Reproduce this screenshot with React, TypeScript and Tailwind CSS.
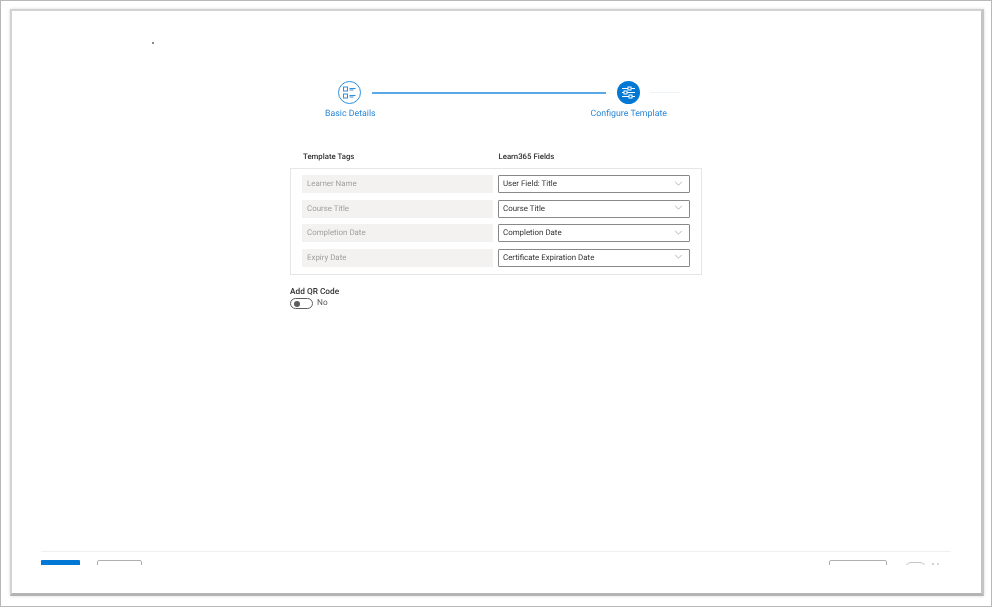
const font = { fontFamily: 'Roboto, "Open Sans", sans-serif' };

const rows = [
  ["Learner Name", "User Field: Title"],
  ["Course Title", "Course Title"],
  ["Completion Date", "Completion Date"],
  ["Expiry Date", "Certificate Expiration Date"],
];

function ChecklistIcon() {
  return (
    <svg width="15" height="15" viewBox="0 0 15 15" fill="none" stroke="#2f8fdc" strokeWidth="1">
      <rect x="1.5" y="2" width="4" height="4" />
      <rect x="1.5" y="9" width="4" height="4" />
      <path d="M7.5 3.5h6M7.5 5h4M7.5 10.5h6M7.5 12h4" />
    </svg>
  );
}

function SlidersIcon() {
  return (
    <svg width="15" height="15" viewBox="0 0 15 15" fill="none" stroke="#ffffff" strokeWidth="1">
      <path d="M1 3.5h6M10 3.5h4M1 7.5h2M6 7.5h8M1 11.5h7M11 11.5h3" />
      <rect x="7" y="2" width="3" height="3" />
      <rect x="3" y="6" width="3" height="3" />
      <rect x="8" y="10" width="3" height="3" />
    </svg>
  );
}

function Chevron() {
  return (
    <svg className="-mt-[2px]" width="9" height="5" viewBox="0 0 10 6" fill="none" stroke="#a19f9d" strokeWidth="0.9">
      <path d="M1 1l4 4 4-4" />
    </svg>
  );
}

export default function App() {
  return (
    <div className="w-[992px] h-[607px] overflow-hidden bg-white border border-[#b8b8b8] blur-[0.55px] [text-rendering:geometricPrecision]" style={font}>
      <div className="relative ml-[9px] mt-[8px] w-[974px] h-[587px] flex flex-col bg-white border-2 border-[#d2d2d2] border-r-[3px] border-b-[3px] border-r-[#c4c4c4] border-b-[#b4b4b4] shadow-[0_0_3px_#d8d8d8]">
        <div className="absolute left-[140px] top-[31px] w-[2px] h-[2px] bg-[#8a8a8a]" />
        <div className="flex-1 flex flex-col">
          <div className="ml-[313px] mt-[70px]">
            <div className="flex items-center pl-[13px]">
              <div className="w-[23px] h-[23px] rounded-full border border-[#2f8fdc] flex items-center justify-center shrink-0">
                <ChecklistIcon />
              </div>
              <div className="ml-[11px] w-[234px] h-[2px] bg-[#5aa9e6] shrink-0" />
              <div className="ml-[11px] w-[23px] h-[23px] rounded-full bg-[#0078d4] flex items-center justify-center shrink-0">
                <SlidersIcon />
              </div>
              <div className="ml-[10px] w-[30px] h-px bg-[#eef3f8] shrink-0" />
            </div>
            <div className="w-[342px] flex justify-between mt-[4px] text-[8.8px] leading-[12px] text-[#2b88d8]">
              <span>Basic Details</span>
              <span>Configure Template</span>
            </div>
          </div>

          <div className="w-[412px] ml-[278px] mt-[31px]">
            <div className="flex text-[7.8px] leading-[12px] font-medium text-[#323130] pl-[13px]">
              <span className="w-[195.5px]">Template Tags</span>
              <span>Learn365 Fields</span>
            </div>
            <div className="mt-[5px] border border-[#e6e6e6] px-[11px] py-[6px] h-[107px] flex flex-col gap-[6.5px]">
              {rows.map(([tag, field]) => (
                <div key={tag} className="flex gap-[5px] h-[18px]">
                  <div className="w-[191px] bg-[#f3f2f1] flex items-center pl-[5px] text-[7.9px] text-[#a19f9d]">{tag}</div>
                  <div className="w-[192px] border border-[#8a8886] rounded-[1px] bg-white flex items-center justify-between pl-[4px] pr-[6px] text-[7.9px] text-[#323130]">
                    <span>{field}</span>
                    <Chevron />
                  </div>
                </div>
              ))}
            </div>
            <div className="mt-[11px] text-[8.3px] leading-[12px] font-medium text-[#323130]">Add QR Code</div>
            <div className="flex items-center gap-[4px]">
              <div className="w-[23px] h-[11px] rounded-full border border-[#605e5c] flex items-center pl-[3px]">
                <div className="w-[6px] h-[6px] rounded-full bg-[#605e5c]" />
              </div>
              <span className="text-[8.3px] leading-[9px] text-[#605e5c]">No</span>
            </div>
          </div>
        </div>

        <div className="ml-[29px] w-[910px] h-[14px] border-t border-[#f0f0f0] overflow-hidden flex items-start pt-[8px] pr-[6px]">
          <div className="w-[39px] h-[28px] bg-[#0078d4] rounded-[1px] shrink-0" />
          <div className="ml-[17px] w-[45px] h-[28px] border border-[#b0b0b0] rounded-[2px] shrink-0" />
          <div className="ml-auto w-[58px] h-[28px] border border-[#b0b0b0] rounded-[2px] shrink-0" />
          <div className="ml-[18px] mt-[2px] w-[21px] h-[21px] border border-[#c4c4c4] rounded-[6px] shrink-0" />
          <div className="ml-[6px] mt-[3px] w-[13px] flex gap-[3px] shrink-0">
            <div className="w-[2px] h-[4px] bg-[#d0d0d0]" />
            <div className="w-[2px] h-[4px] bg-[#d8d8d8]" />
          </div>
        </div>
        <div className="h-[28px]" />
      </div>
    </div>
  );
}
